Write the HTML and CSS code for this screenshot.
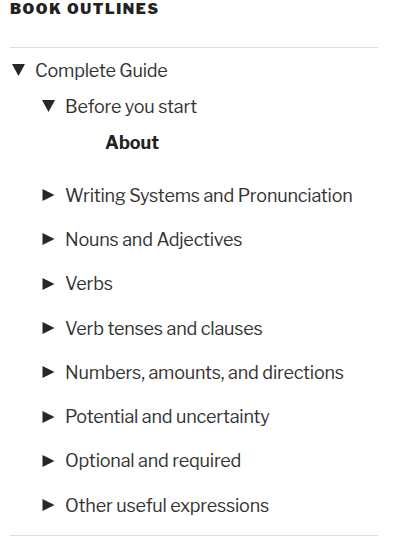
FILE: index.html
```html
<!DOCTYPE html>
<html lang="en">
  <head>
    <meta charset="UTF-8" />
    <meta name="viewport" content="width=device-width, initial-scale=1.0" />
    <title>Book Outlines</title>
    <link rel="stylesheet" href="styles.css">
  </head>
  <body>
    <section class="widget">
      <h2 class="widget-title">Book Outlines</h2>
      <ul class="outline">
        <li class="open">
          <div class="node"><svg class="toggle" viewBox="0 0 13 12"><polygon points="0,0 13,0 6.5,12" /></svg>Complete Guide</div>
          <ul class="sub">
            <li class="open">
              <div class="node"><svg class="toggle" viewBox="0 0 13 12"><polygon points="0,0 13,0 6.5,12" /></svg>Before you start</div>
              <ul class="pages">
                <li class="current">About</li>
              </ul>
            </li>
            <li class="closed"><div class="node"><svg class="toggle" viewBox="0 0 13 12"><polygon points="0.5,0 12.5,6 0.5,12" /></svg>Writing Systems and Pronunciation</div></li>
            <li class="closed"><div class="node"><svg class="toggle" viewBox="0 0 13 12"><polygon points="0.5,0 12.5,6 0.5,12" /></svg>Nouns and Adjectives</div></li>
            <li class="closed"><div class="node"><svg class="toggle" viewBox="0 0 13 12"><polygon points="0.5,0 12.5,6 0.5,12" /></svg>Verbs</div></li>
            <li class="closed"><div class="node"><svg class="toggle" viewBox="0 0 13 12"><polygon points="0.5,0 12.5,6 0.5,12" /></svg>Verb tenses and clauses</div></li>
            <li class="closed"><div class="node"><svg class="toggle" viewBox="0 0 13 12"><polygon points="0.5,0 12.5,6 0.5,12" /></svg>Numbers, amounts, and directions</div></li>
            <li class="closed"><div class="node"><svg class="toggle" viewBox="0 0 13 12"><polygon points="0.5,0 12.5,6 0.5,12" /></svg>Potential and uncertainty</div></li>
            <li class="closed"><div class="node"><svg class="toggle" viewBox="0 0 13 12"><polygon points="0.5,0 12.5,6 0.5,12" /></svg>Optional and required</div></li>
            <li class="closed"><div class="node"><svg class="toggle" viewBox="0 0 13 12"><polygon points="0.5,0 12.5,6 0.5,12" /></svg>Other useful expressions</div></li>
          </ul>
        </li>
      </ul>
    </section>
  </body>
</html>
```

FILE: styles.css
```css
/* sidebar widget */
body {
  margin: 0;
  padding: 0;
  background-color: #fff;
  color: #222;
  font-family: "Libre Franklin", Roboto, "Noto Sans", sans-serif;
}

.widget {
  width: 368px;
  margin-left: 10px;
  padding-bottom: 8px;
  border-bottom: 1px solid #ddd;
}

.widget-title {
  margin: 0;
  padding-bottom: 29px;
  border-bottom: 1px solid #ddd;
  font-size: 15px;
  line-height: 18px;
  font-weight: 900;
  letter-spacing: 1.6px;
  text-transform: uppercase;
  color: #222;
}

ul {
  list-style: none;
  margin: 0;
  padding: 0;
}

.outline {
  margin-top: 4px;
}

.node {
  display: flex;
  align-items: center;
  height: 36px;
  font-size: 18px;
  letter-spacing: -0.2px;
  color: #333;
}

/* disclosure triangle */
.toggle {
  width: 13px;
  height: 12px;
  margin-left: 2px;
  margin-right: 10px;
  flex-shrink: 0;
  fill: #2b2626;
}

.sub {
  padding-left: 30px;
}

.pages {
  padding-left: 65px;
  margin-bottom: 12px;
}

.current {
  margin-top: 1px;
  height: 36px;
  line-height: 36px;
  font-size: 18px;
  font-weight: 700;
  color: #222;
}

.closed .node {
  height: 44.3px;
}
```
